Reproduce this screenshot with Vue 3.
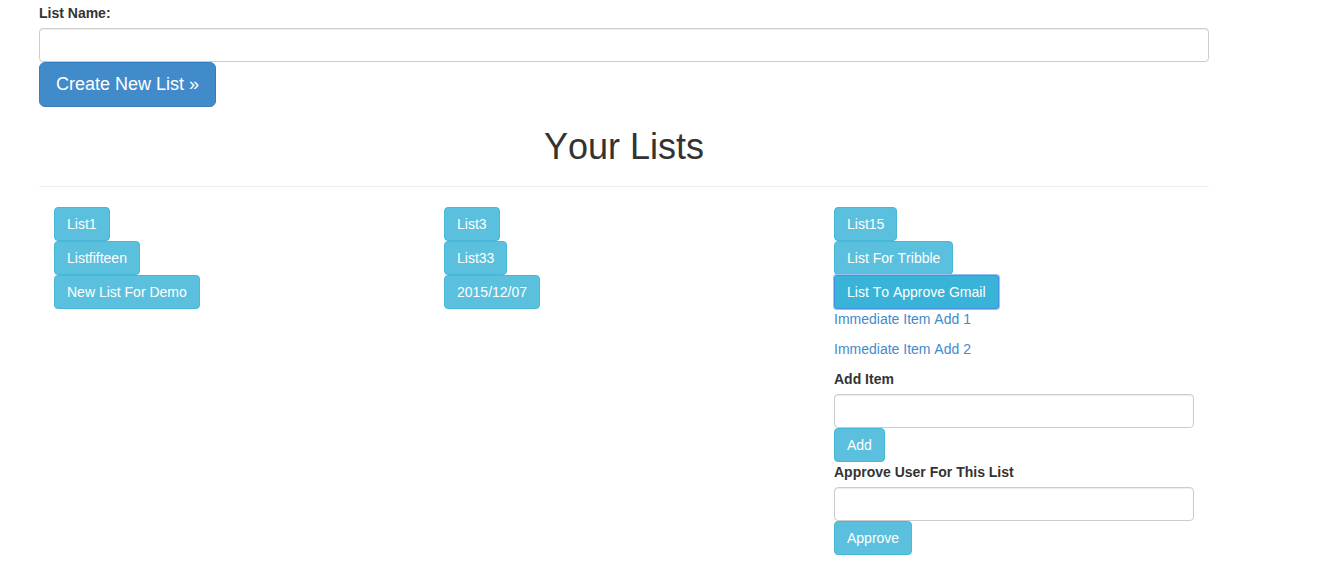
<script setup>
import { ref } from 'vue'

const listName = ref('')
const newItem = ref('')
const approvedUser = ref('')

const columns = [
  ['List1', 'Listfifteen', 'New List For Demo'],
  ['List3', 'List33', '2015/12/07'],
  ['List15', 'List For Tribble', 'List To Approve Gmail'],
]
const openList = 'List To Approve Gmail'
const items = ['Immediate Item Add 1', 'Immediate Item Add 2']
</script>

<template>
  <main class="container">
    <form @submit.prevent>
      <label class="label" for="list-name">List Name:</label>
      <input id="list-name" v-model="listName" class="field" type="text" />
      <button class="btn btn-primary" type="submit">Create New List »</button>
    </form>

    <h1 class="title">Your Lists</h1>
    <hr class="rule" />

    <div class="columns">
      <section v-for="(lists, i) in columns" :key="i" class="column">
        <template v-for="name in lists" :key="name">
          <button class="btn btn-info" :class="{ active: name === openList }" type="button">{{ name }}</button>
          <div v-if="name === openList" class="details">
            <p v-for="item in items" :key="item" class="item"><a href="#">{{ item }}</a></p>
            <form @submit.prevent>
              <label class="label" for="new-item">Add Item</label>
              <input id="new-item" v-model="newItem" class="field" type="text" />
              <button class="btn btn-info" type="submit">Add</button>
            </form>
            <form @submit.prevent>
              <label class="label" for="approve-user">Approve User For This List</label>
              <input id="approve-user" v-model="approvedUser" class="field" type="text" />
              <button class="btn btn-info" type="submit">Approve</button>
            </form>
          </div>
        </template>
      </section>
    </div>
  </main>
</template>

<style>
body {
  margin: 0;
  background: #fff;
}
</style>

<style scoped>
.container,
.container * {
  box-sizing: border-box;
}

.container {
  max-width: 1170px;
  margin: 0 108px 0 39px;
  padding-top: 3px;
  font-family: "Liberation Sans", Arial, sans-serif;
  font-size: 14px;
  font-kerning: none;
  line-height: 20px;
  color: #333;
}

.label {
  display: block;
  margin-bottom: 5px;
  font-weight: bold;
}

.field {
  display: block;
  width: 100%;
  height: 34px;
  padding: 6px 12px;
  border: 1px solid #ccc;
  border-radius: 4px;
  background: #fff;
  box-shadow: inset 0 1px 1px rgba(0, 0, 0, 0.075);
  font: inherit;
  color: #555;
}

.btn {
  display: block;
  border: 1px solid transparent;
  color: #fff;
  font-family: inherit;
  font-kerning: none;
  white-space: nowrap;
  cursor: pointer;
}

.btn-primary {
  padding: 10px 16px;
  border-color: #357ebd;
  border-radius: 6px;
  background: #428bca;
  font-size: 18px;
  line-height: 23px;
}

.btn-info {
  padding: 6px 12px;
  border-color: #46b8da;
  border-radius: 4px;
  background: #5bc0de;
  font-size: 14px;
  line-height: 20px;
}

.btn-info.active {
  position: relative;
  border-color: #3f93e0;
  border-radius: 3px;
  background: #39b3d7;
  box-shadow: 0 0 0 1px #a0c0f8;
}

.title {
  margin: 20px 0;
  font-size: 36px;
  font-weight: 500;
  line-height: 39px;
  text-align: center;
}

.rule {
  height: 1px;
  margin: 20px 0;
  border: 0;
  background: #eee;
}

.columns {
  display: grid;
  grid-template-columns: repeat(3, 1fr);
}

.column {
  min-width: 0;
  padding: 0 15px;
}

.item {
  margin: 0 0 10px;
}

.item a {
  color: #428bca;
  text-decoration: none;
}
</style>
